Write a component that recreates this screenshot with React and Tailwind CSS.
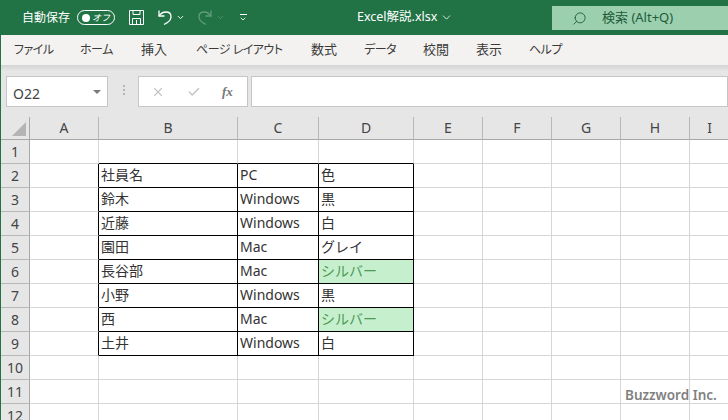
import { ChevronDown, Search, X, Check } from 'lucide-react'

const JP = { fontFamily: '"Noto Sans", "Noto Sans CJK JP", sans-serif' }

const KANA = 'text-[12px] tracking-[-0.5px]'
const KANJI = 'text-[13px]'

const TABS = [
  { label: 'ファイル', w: 'w-[66px]', font: KANA },
  { label: 'ホーム', w: 'w-[61px]', font: KANA },
  { label: '挿入', w: 'w-[55px]', font: KANJI },
  { label: 'ページ レイアウト', w: 'w-[115px]', font: KANA },
  { label: '数式', w: 'w-[53px]', font: KANJI },
  { label: 'データ', w: 'w-[59px]', font: KANA },
  { label: '校閲', w: 'w-[53px]', font: KANJI },
  { label: '表示', w: 'w-[53px]', font: KANJI },
  { label: 'ヘルプ', w: 'w-[60px]', font: KANA },
]

const COLS = ['A', 'B', 'C', 'D', 'E', 'F', 'G', 'H', 'I']

const DATA = {
  2: ['社員名', 'PC', '色'],
  3: ['鈴木', 'Windows', '黒'],
  4: ['近藤', 'Windows', '白'],
  5: ['園田', 'Mac', 'グレイ'],
  6: ['長谷部', 'Mac', 'シルバー'],
  7: ['小野', 'Windows', '黒'],
  8: ['西', 'Mac', 'シルバー'],
  9: ['土井', 'Windows', '白'],
}

const ROWS = [1, 2, 3, 4, 5, 6, 7, 8, 9, 10, 11, 12]

function SaveIcon() {
  return (
    <svg width="17" height="17" viewBox="0 0 17 17" fill="none" stroke="#fff" strokeWidth="1">
      <path d="M1.500 1.500h14v14h-14z" />
      <path d="M5 1.500v4h7v-4M4.500 15.500v-6h8v6M8.500 11v4.500" />
    </svg>
  )
}

function UndoIcon({ color }) {
  return (
    <svg width="16" height="17" viewBox="0 0 16 17" fill="none" stroke={color} strokeWidth="1.3">
      <path d="M2 1.500v5.500h5.500" />
      <path d="M2 7C4 4 6.500 3 9 3c3 0 5 2 5 4.800 0 3.700-3.500 6.200-7 7.700" />
    </svg>
  )
}

function Cell({ row, col }) {
  // col 0 = A, the table spans B:D
  const values = DATA[row]
  const inTable = values && col >= 1 && col <= 3
  const text = inTable ? values[col - 1] : ''
  const green = text === 'シルバー'
  const blackRight = values && col >= 0 && col <= 3
  const blackBottom = (row === 1 || values) && col >= 1 && col <= 3
  return (
    <div
      className={`flex items-center overflow-hidden whitespace-nowrap border-r border-b pb-[2px] pl-[2px] text-[14px] leading-none ${
        blackRight ? 'border-r-black' : 'border-r-[#d6d6d6]'
      } ${blackBottom ? 'border-b-black' : 'border-b-[#d6d6d6]'} ${
        green ? 'bg-[#c6efce] text-[#4c9a57]' : 'bg-white text-[#333333]'
      }`}
    >
      {text}
    </div>
  )
}

export default function App() {
  return (
    <div className="relative flex h-[420px] w-[728px] flex-col overflow-hidden border-l border-l-[#217346] bg-[#e6e6e6]" style={JP}>
      {/* Title bar */}
      <div className="relative flex h-[35px] shrink-0 items-center bg-[#217346] text-white">
        <span className="ml-[21px] text-[12px]">自動保存</span>
        <div className="ml-[7px] flex h-[15px] w-[38px] items-center justify-between rounded-full border border-white px-[4px]">
          <span className="h-[8px] w-[8px] rounded-full bg-white" />
          <span className="text-[9px] italic leading-none">オフ</span>
        </div>
        <div className="ml-[13px]"><SaveIcon /></div>
        <div className="ml-[12px]"><UndoIcon color="#ffffff" /></div>
        <ChevronDown className="ml-[3px] h-[9px] w-[9px]" strokeWidth={2.5} />
        <div className="ml-[12px] -scale-x-100"><UndoIcon color="#5f9c7d" /></div>
        <ChevronDown className="ml-[3px] h-[9px] w-[9px] text-[#5f9c7d]" strokeWidth={2} />
        <div className="ml-[14px] flex flex-col items-center gap-[2px]">
          <span className="h-px w-[7px] bg-white" />
          <ChevronDown className="-my-[2px] h-[8px] w-[8px]" strokeWidth={2.5} />
        </div>
        <div className="absolute left-[356px] top-0 flex h-[35px] items-center gap-[3px] text-[12.5px]">
          <span>Excel解説.xlsx</span>
          <ChevronDown className="h-[13px] w-[13px]" strokeWidth={1.5} />
        </div>
        <div className="absolute left-[551px] top-[6px] flex h-[24px] w-[176px] items-center bg-[#9ccfae] text-[#1d5c3a]">
          <Search className="ml-[20px] h-[15px] w-[15px] -scale-x-100" strokeWidth={1.4} />
          <span className="ml-[15px] text-[13px]">検索 (Alt+Q)</span>
        </div>
      </div>

      {/* Ribbon tabs */}
      <div className="flex h-[30px] shrink-0 items-center bg-[#f3f2f1] text-[#3b3a39] [font-feature-settings:'palt']">
        {TABS.map((t) => (
          <span key={t.label} className={`${t.w} ${t.font} shrink-0 whitespace-nowrap pl-[13px]`}>{t.label}</span>
        ))}
      </div>

      {/* Formula bar */}
      <div className="flex h-[52px] shrink-0 items-start bg-gradient-to-b from-[#d4d4d4] to-[#e6e6e6] to-[6px] pt-[11px]">
        <div className="ml-[5px] flex h-[31px] w-[102px] items-center justify-between border border-[#c6c6c6] bg-white pl-[6px] pr-[6px] text-[14px] text-[#444]">
          <span className="mt-[3px]">O22</span>
          <span className="h-0 w-0 border-x-[4px] border-t-[4px] border-x-transparent border-t-[#7a7a7a]" />
        </div>
        <div className="ml-[15px] mt-[9px] flex flex-col gap-[2px]">
          <span className="h-[2px] w-[2px] bg-[#b5b5b5]" />
          <span className="h-[2px] w-[2px] bg-[#b5b5b5]" />
          <span className="h-[2px] w-[2px] bg-[#b5b5b5]" />
        </div>
        <div className="ml-[13px] flex h-[31px] w-[110px] items-center border border-[#c6c6c6] bg-white">
          <X className="ml-[12px] h-[14px] w-[14px] text-[#c4c4c4]" strokeWidth={2} />
          <Check className="ml-[22px] h-[14px] w-[14px] text-[#c4c4c4]" strokeWidth={2.5} />
          <span className="ml-[21px] text-[13px] font-bold italic leading-none text-[#777]" style={{ fontFamily: '"Liberation Serif", serif' }}>fx</span>
        </div>
        <div className="ml-[3px] h-[31px] flex-1 border border-[#c6c6c6] bg-white" />
      </div>

      {/* Sheet */}
      <div className="grid flex-1 grid-cols-[29px_69px_139px_81px_95px_69px_69px_69px_69px_40px] grid-rows-[23px_repeat(12,24px)] text-[14px]">
        <div className="relative border-r border-b border-[#a8a8a8] bg-[#e6e6e6]">
          <span className="absolute bottom-[3px] right-[3px] h-0 w-0 border-b-[14px] border-l-[14px] border-b-[#b4b4b4] border-l-transparent" />
        </div>
        {COLS.map((c) => (
          <div key={c} className="flex items-center justify-center border-r border-b border-r-[#b8b8b8] border-b-[#a8a8a8] bg-[#e6e6e6] pb-[1px] text-[#444]">{c}</div>
        ))}
        {ROWS.map((r) => (
          <div key={r} className="contents">
            <div className="flex items-center justify-center border-r border-b border-r-[#a8a8a8] border-b-[#b8b8b8] bg-[#e6e6e6] pb-[1px] text-[#444]">{r}</div>
            {[0, 1, 2, 3, 4, 5, 6, 7, 8].map((c) => (
              <Cell key={c} row={r} col={c} />
            ))}
          </div>
        ))}
      </div>

      {/* Watermark */}
      <span className="absolute left-[624px] top-[389px] text-[13.5px] font-semibold leading-none text-[#7f7f7f]">Buzzword Inc.</span>
    </div>
  )
}
